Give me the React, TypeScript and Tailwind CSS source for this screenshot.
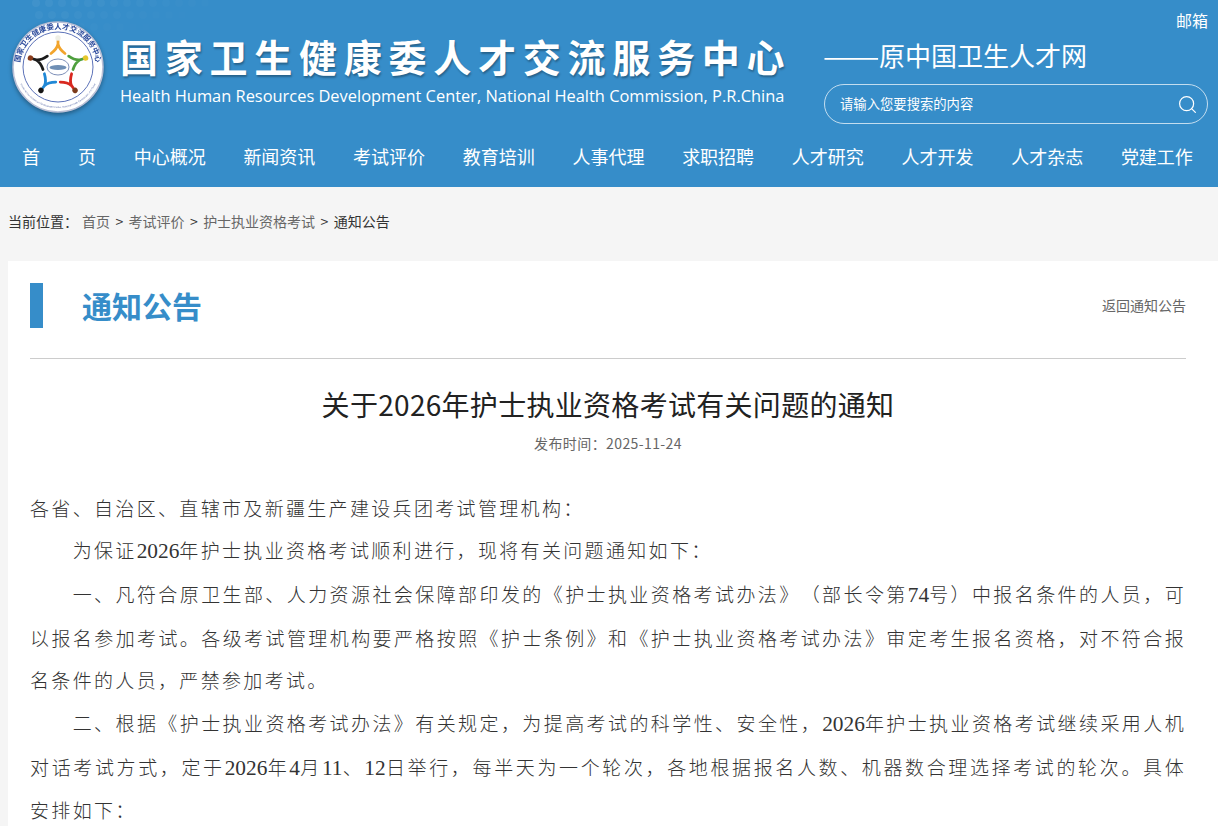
import { Search } from "lucide-react";

const navItems = [
  "中心概况",
  "新闻资讯",
  "考试评价",
  "教育培训",
  "人事代理",
  "求职招聘",
  "人才研究",
  "人才开发",
  "人才杂志",
  "党建工作",
];

const figures = [
  { rotate: 0, color: "#f2a42c", head: "#efefe6" },
  { rotate: 72, color: "#4e9f3d", head: "#e6c62a" },
  { rotate: 144, color: "#d8281f", head: "#7b3b1c" },
  { rotate: 216, color: "#2088d6", head: "#151515" },
  { rotate: 288, color: "#1b1b1b", head: "#8b3c1c" },
];

const dotRows = [3, 15, 27];
const dotCols = Array.from({ length: 14 }, (_, i) => 36 + i * 13);

const Logo = () => (
  <svg width="92" height="92" viewBox="0 0 92 92" className="drop-shadow-[0_2px_2px_rgba(0,0,0,0.35)]">
    <circle cx="46" cy="46" r="45" fill="#fff" stroke="#b9bfd6" strokeWidth="1.5" />
    <circle cx="46" cy="46" r="35" fill="#fff" stroke="#4a62b0" strokeWidth="0.9" />
    <defs>
      <path id="logo-arc" d="M 8 50 A 38.2 38.2 0 1 1 84 50" />
      <path id="logo-arc-low" d="M 5 52 A 41.5 41.5 0 0 0 87 52" />
    </defs>
    <text fontSize="7.4" fontWeight="700" fill="#2b4a9c" fontFamily="'Noto Sans CJK SC', serif">
      <textPath href="#logo-arc" startOffset="50%" textAnchor="middle">
        国家卫生健康委人才交流服务中心
      </textPath>
    </text>
    <text fontSize="2.4" fill="#5a6ca8" fontFamily="'Liberation Sans', sans-serif">
      <textPath href="#logo-arc-low" startOffset="50%" textAnchor="middle">
        Health Human Resources Development Center, National Health Commission, P.R.China
      </textPath>
    </text>
    {figures.map((f) => (
      <g key={f.rotate} transform={`rotate(${f.rotate} 46 46)`}>
        <path
          d="M46 20 L46 23 Q45 28 39 32.5 M46 23 Q47 28 53 32.5"
          fill="none"
          stroke={f.color}
          strokeWidth="2.8"
          strokeLinecap="round"
        />
        <circle cx="46" cy="17" r="2.7" fill={f.head} />
      </g>
    ))}
    <ellipse cx="46" cy="46" rx="11" ry="8" fill="#fff" stroke="#7d8fb8" strokeWidth="1" />
    <ellipse cx="46" cy="46.5" rx="8.5" ry="2.6" fill="#6f8fb5" />
  </svg>
);

const Num = ({ children }: { children: string }) => (
  <span className="font-['Liberation_Serif',serif] text-[21.33px] tracking-normal">{children}</span>
);

const App = () => {
  return (
    <div className="h-[826px] overflow-hidden bg-[#f5f5f5] font-['Noto_Sans_CJK_SC',sans-serif]">
      <header className="relative h-[187px] bg-[#368dc9] text-white">
        <svg className="absolute left-0 top-0" width="240" height="34">
          {dotRows.map((y, r) =>
            dotCols.map((x, c) => (
              <circle key={`${r}-${c}`} cx={x + r * 3} cy={y} r="4" fill="#fff" opacity={0.05 - c * 0.003 - r * 0.01} />
            )),
          )}
        </svg>
        <div className="relative flex h-[136px]">
          <div className="ml-[12px] mt-[21px]">
            <Logo />
          </div>
          <div className="ml-[16px] w-[695px]">
            <h1 className="mt-[34px] h-[44px] whitespace-nowrap text-[38px] font-bold leading-[44px] tracking-[6.75px] [text-shadow:1px_2px_2px_rgba(0,0,0,0.3)]">
              国家卫生健康委人才交流服务中心
            </h1>
            <p className="mt-[6px] whitespace-nowrap font-['Open_Sans',sans-serif] text-[16.42px] leading-[24px]">
              Health Human Resources Development Center, National Health Commission, P.R.China
            </p>
          </div>
          <div className="ml-[8px] w-[385px]">
            <div className="mt-[8px] text-right text-[16px] leading-[24px]">邮箱</div>
            <div className="mt-[6px] whitespace-nowrap text-[26px] leading-[34px]">
              <span className="inline-block w-[56px] origin-left scale-x-[1.3]">——</span>
              原中国卫生人才网
            </div>
            <div className="ml-[1px] mt-[12px] flex h-[40px] items-center justify-between rounded-full border border-white/70 pl-[15px] pr-[9px]">
              <span className="text-[13.33px]">请输入您要搜索的内容</span>
              <Search size={21} strokeWidth={1.4} />
            </div>
          </div>
        </div>
        <nav className="relative flex h-[40px] items-center justify-between pl-[22px] pr-[25px] text-[18px] leading-[40px]">
          <a className="flex w-[74px] justify-between">
            <span>首</span>
            <span>页</span>
          </a>
          {navItems.map((item) => (
            <a key={item}>{item}</a>
          ))}
        </nav>
      </header>

      <div className="h-[74px] pl-[8px] pt-[24px] text-[14px] leading-[20px] text-[#333]">
        <span className="mr-[4px]">当前位置：</span>
        <span className="text-[#666]">首页</span>
        <span className="mx-[5.4px]">&gt;</span>
        <span className="text-[#666]">考试评价</span>
        <span className="mx-[5.4px]">&gt;</span>
        <span className="text-[#666]">护士执业资格考试</span>
        <span className="mx-[5.4px]">&gt;</span>
        <span>通知公告</span>
      </div>

      <main className="ml-[8px] bg-white pl-[22px] pr-[32px] pt-[22px] pb-[40px]">
        <div className="flex items-center justify-between border-b border-[#ccc] pb-[30px]">
          <div className="flex h-[45px] items-center">
            <span className="h-[45px] w-[13px] bg-[#368dc9]" />
            <h2 className="ml-[39px] text-[30px] font-bold leading-[45px] text-[#368dc9]">通知公告</h2>
          </div>
          <a className="pb-[1px] text-[14px] text-[#666]">返回通知公告</a>
        </div>

        <h3 className="mt-[25px] text-center text-[28px] leading-[40px] tracking-[0.3px] text-[#222]">
          关于2026年护士执业资格考试有关问题的通知
        </h3>
        <p className="mt-[9px] text-center text-[14px] leading-[20px] tracking-[0.4px] text-[#666]">
          发布时间：2025-11-24
        </p>

        <article className="mt-[33.5px] text-justify font-['Noto_Sans_CJK_SC',serif] text-[19px] font-light leading-[42.67px] tracking-[2.33px] text-[#333] [text-spacing-trim:space-all]">
          <p>各省、自治区、直辖市及新疆生产建设兵团考试管理机构：</p>
          <p className="indent-[42.67px]">
            为保证<Num>2026</Num>年护士执业资格考试顺利进行，现将有关问题通知如下：
          </p>
          <p className="indent-[42.67px]">
            一、凡符合原卫生部、人力资源社会保障部印发的《护士执业资格考试办法》（部长令第<Num>74</Num>号）中报名条件的人员，可以报名参加考试。各级考试管理机构要严格按照《护士条例》和《护士执业资格考试办法》审定考生报名资格，对不符合报名条件的人员，严禁参加考试。
          </p>
          <p className="indent-[42.67px]">
            二、根据《护士执业资格考试办法》有关规定，为提高考试的科学性、安全性，<Num>2026</Num>年护士执业资格考试继续采用人机对话考试方式，定于<Num>2026</Num>年<Num>4</Num>月<Num>11</Num>、<Num>12</Num>日举行，每半天为一个轮次，各地根据报名人数、机器数合理选择考试的轮次。具体安排如下：
          </p>
        </article>
      </main>
    </div>
  );
};

export default App;
